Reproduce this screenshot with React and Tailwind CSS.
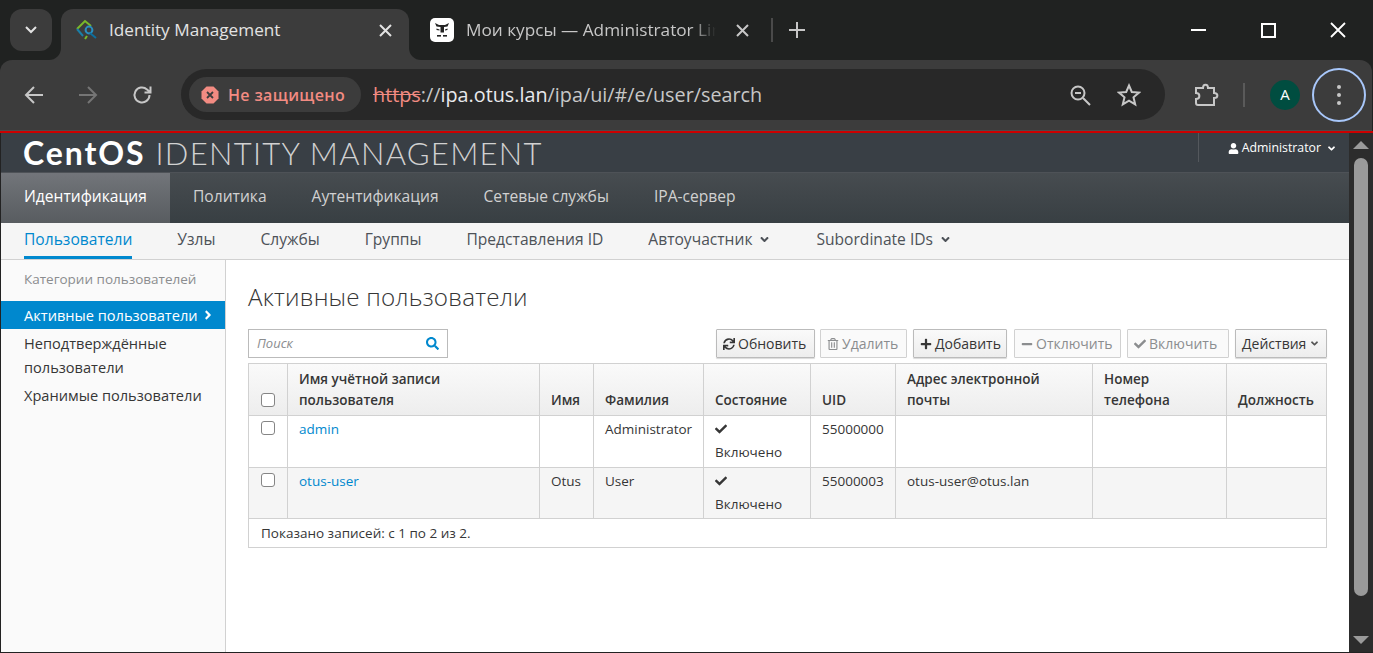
import { FaSync, FaRegTrashAlt, FaPlus, FaMinus, FaCheck, FaSearch, FaUser, FaAngleDown, FaAngleRight } from 'react-icons/fa';

const columns = [39, 252, 54, 110, 107, 85, 197, 134, 100];

function IpaFavicon() {
  return (
    <svg width="24" height="24" viewBox="0 0 24 24" fill="none" strokeWidth="2">
      <path d="M4 11 L12 3 L18 8" stroke="#7ab929" />
      <path d="M4 11 L10 18" stroke="#1a7fa8" />
      <path d="M12 21 L14 18" stroke="#7ab929" />
      <circle cx="16" cy="12" r="3.4" stroke="#2a8fc0" />
      <path d="M17 15 L23 20" stroke="#0e6f9e" />
    </svg>
  );
}

function MoodleFavicon() {
  return (
    <div className="flex h-6 w-6 items-center justify-center rounded-[5px] bg-white">
      <svg width="20" height="20" viewBox="0 0 20 20" fill="#222">
        <path d="M3 3 L7 5 H13 L17 3 L15.5 6.5 L12 7 V12.5 H8.5 V7 L4.5 6.5 Z" />
        <path d="M4.5 8.5 L7.5 9.5 V10.5 L4.5 10 Z M15.5 8.5 L13 9.5 V10.5 L15.5 10 Z" />
        <rect x="5" y="15" width="4" height="1.6" />
        <rect x="11" y="15" width="4" height="1.6" />
      </svg>
    </div>
  );
}

function TabStrip() {
  return (
    <div className="relative flex h-[60px] items-start bg-[#202221] pl-[10px] pt-[9px] text-[#c7c7c7]">
      <div className="flex h-[42px] w-[42px] items-center justify-center rounded-xl bg-[#3c3c3c]">
        <svg width="14" height="10" viewBox="0 0 14 10" fill="none" stroke="#e3e3e3" strokeWidth="2"><path d="M2 2 L7 7 L12 2" /></svg>
      </div>
      <div className="relative ml-[9px] flex h-[51px] w-[348px] items-center rounded-t-xl bg-[#3c3c3c] pb-[9px] pl-[12px]">
        <IpaFavicon />
        <span className="ml-[12px] font-['Open_Sans',sans-serif] text-[17.2px] text-[#e3e3e3]">Identity Management</span>
        <svg className="absolute left-[318px] top-[15px]" width="13" height="13" viewBox="0 0 13 13" stroke="#e3e3e3" strokeWidth="2"><path d="M1 1 L12 12 M12 1 L1 12" /></svg>
        <div className="absolute -left-3 bottom-0 h-3 w-3 bg-[#3c3c3c]"><div className="h-3 w-3 rounded-br-xl bg-[#202221]" /></div>
        <div className="absolute -right-3 bottom-0 h-3 w-3 bg-[#3c3c3c]"><div className="h-3 w-3 rounded-bl-xl bg-[#202221]" /></div>
      </div>
      <div className="ml-[21px] flex h-[42px] items-center">
        <MoodleFavicon />
        <span className="ml-[12px] w-[250px] overflow-hidden whitespace-nowrap font-['Open_Sans',sans-serif] text-[17.2px] [mask-image:linear-gradient(to_right,black_90%,transparent)]">Мои курсы — Administrator Linux</span>
        <svg className="ml-[20px]" width="13" height="13" viewBox="0 0 13 13" stroke="#c7c7c7" strokeWidth="2"><path d="M1 1 L12 12 M12 1 L1 12" /></svg>
        <div className="ml-[22px] h-6 w-[2px] bg-[#4a4a4a]" />
        <svg className="ml-[16px]" width="16" height="16" viewBox="0 0 16 16" stroke="#c7c7c7" strokeWidth="2"><path d="M8 0 V16 M0 8 H16" /></svg>
      </div>
      <div className="ml-auto flex h-[42px] items-center pr-[27px]">
        <div className="h-[2px] w-[15px] bg-white" />
        <div className="ml-[55px] h-[15px] w-[15px] border-2 border-white" />
        <svg className="ml-[54px]" width="16" height="16" viewBox="0 0 16 16" stroke="#fff" strokeWidth="1.8"><path d="M1 1 L15 15 M15 1 L1 15" /></svg>
      </div>
    </div>
  );
}

function Toolbar() {
  return (
    <div className="flex h-[71px] w-[1372px] items-center rounded-t-xl border-b border-[#4a4a4a] bg-[#3c3c3c] pb-[1px] pl-[24px]">
      <svg width="20" height="20" viewBox="0 0 20 20" fill="none" stroke="#c7c7c7" strokeWidth="2"><path d="M19 10 H2 M10 2 L2 10 L10 18" /></svg>
      <svg className="ml-[34px]" width="20" height="20" viewBox="0 0 20 20" fill="none" stroke="#757575" strokeWidth="2"><path d="M1 10 H18 M10 2 L18 10 L10 18" /></svg>
      <svg className="ml-[34px]" width="20" height="20" viewBox="0 0 20 20" fill="none" stroke="#c7c7c7" strokeWidth="2"><path d="M17.5 10 A7.5 7.5 0 1 1 15 4.4 L18 7 M18.5 1.5 V7.5 H12.5" /></svg>
      <div className="ml-[29px] flex h-[51px] w-[984px] items-center rounded-full bg-[#282828] pl-[8px]">
        <div className="flex h-[35px] w-[172px] items-center rounded-full bg-[#3c3c3c] pl-[12px]">
          <svg width="18" height="18" viewBox="0 0 18 18">
            <path d="M5.5 0.5 H12.5 L17.5 5.5 V12.5 L12.5 17.5 H5.5 L0.5 12.5 V5.5 Z" fill="#f28b82" />
            <path d="M6 6 L12 12 M12 6 L6 12" stroke="#3c3c3c" strokeWidth="1.8" />
          </svg>
          <span className="ml-[9px] whitespace-nowrap font-['Open_Sans',sans-serif] text-[16px] font-semibold tracking-[0.35px] text-[#f28b82]">Не защищено</span>
        </div>
        <div className="ml-[12px] whitespace-nowrap font-['Open_Sans',sans-serif] text-[19.8px] text-[#c7c7c7]">
          <span className="text-[#f28b82] line-through">https</span>://<span className="text-[#e8eaed]">ipa.otus.lan</span>/ipa/ui/#/e/user/search
        </div>
        <svg className="ml-auto" width="22" height="22" viewBox="0 0 22 22" fill="none" stroke="#c7c7c7" strokeWidth="2"><circle cx="9" cy="9" r="6.5" /><path d="M6 9 H12 M14 14 L21 21" /></svg>
        <svg className="ml-[26px] mr-[24px]" width="24" height="24" viewBox="0 0 24 24" fill="none" stroke="#c7c7c7" strokeWidth="2"><path d="M12 2.5 L14.8 9 L22 9.6 L16.5 14.3 L18.2 21.3 L12 17.6 L5.8 21.3 L7.5 14.3 L2 9.6 L9.2 9 Z" /></svg>
      </div>
      <svg className="ml-[28px]" width="26" height="26" viewBox="0 0 26 26" fill="none" stroke="#c7c7c7" strokeWidth="2"><path d="M3 6 H10 C10 1.5 15 1.5 15 6 H21 V11 C25.5 11 25.5 16 21 16 V23 H5 Q3 23 3 21 V17 C7.5 17 7.5 11 3 11 Z" /></svg>
      <div className="ml-[24px] h-6 w-[2px] bg-[#5a5a5a]" />
      <div className="ml-[25px] flex h-[30px] w-[30px] items-center justify-center rounded-full bg-[#004d40] font-['Open_Sans',sans-serif] text-[15px] text-white">A</div>
      <div className="ml-[12px] flex h-[54px] w-[54px] flex-col items-center justify-center gap-[4px] rounded-full border-2 border-[#a8c7fa]">
        <div className="h-1 w-1 rounded-full bg-[#c7c7c7]" />
        <div className="h-1 w-1 rounded-full bg-[#c7c7c7]" />
        <div className="h-1 w-1 rounded-full bg-[#c7c7c7]" />
      </div>
    </div>
  );
}

function Masthead() {
  return (
    <div className="flex h-[40px] items-center justify-between border-b border-[#4e5257] bg-[#393f45] text-white">
      <div className="ml-[22px] flex items-baseline whitespace-nowrap font-['Lato',sans-serif]">
        <span className="text-[32px] font-bold tracking-[1.9px]">CentOS</span>
        <span className="ml-[10px] text-[31px] font-light tracking-[1.3px] text-[#d1d1d1]">IDENTITY MANAGEMENT</span>
      </div>
      <div className="mr-[12px] flex h-[29px] items-center self-start border-l border-[#54585d] pl-[29px] pt-[1px] text-[12.3px]">
        <FaUser className="mr-[3px] text-[11px]" />
        Administrator
        <FaAngleDown className="ml-[5px] text-[11px]" />
      </div>
    </div>
  );
}

function PrimaryNav() {
  const items = ['Политика', 'Аутентификация', 'Сетевые службы', 'IPA-сервер'];
  return (
    <div className="flex h-[50px] bg-gradient-to-b from-[#474c50] to-[#383f43] pb-[2px] text-[15.6px] text-[#d1d1d1]">
      <div className="-mb-[2px] flex w-[169px] items-center bg-gradient-to-b from-[#72757a] to-[#585c60] pb-[2px] pl-[23px] text-white">Идентификация</div>
      <div className="ml-[23px] flex items-center gap-[45px]">
        {items.map((item) => <span key={item}>{item}</span>)}
      </div>
    </div>
  );
}

function SecondaryNav() {
  const items = ['Узлы', 'Службы', 'Группы', 'Представления ID'];
  return (
    <div className="flex h-[37px] items-stretch gap-[45px] border-b border-[#d1d1d1] bg-[#f5f5f5] pl-[23px] text-[15.6px] text-[#4d5258]">
      <span className="flex items-center border-b-[3px] border-[#0088ce] text-[#0088ce]">Пользователи</span>
      {items.map((item) => <span key={item} className="flex items-center pb-[3px]">{item}</span>)}
      <span className="flex items-center pb-[3px]">Автоучастник<FaAngleDown className="ml-[6px] text-[13px]" /></span>
      <span className="flex items-center pb-[3px]">Subordinate IDs<FaAngleDown className="ml-[6px] text-[13px]" /></span>
    </div>
  );
}

function Sidebar() {
  return (
    <div className="w-[225px] shrink-0 border-r border-[#d1d1d1] bg-[#fafafa] pt-[9px] text-[14.6px] leading-[24px] text-[#363636]">
      <div className="pl-[23px] text-[13.5px] leading-[20px] text-[#8b8d8f]">Категории пользователей</div>
      <div className="mt-[12px] flex h-[28px] items-center justify-between bg-[#0088ce] pl-[23px] pr-[10px] text-white">
        Активные пользователи
        <FaAngleRight className="text-[14px]" />
      </div>
      <div className="px-[23px] pt-[2px]">Неподтверждённые пользователи</div>
      <div className="px-[23px] pt-[4px]">Хранимые пользователи</div>
    </div>
  );
}

function ActionButton({ icon: Icon, children, disabled, trailing, className }) {
  return (
    <button className={`flex h-[29px] items-center rounded-[1px] border pl-[6px] text-[14px] ${disabled ? 'border-[#d1d1d1] bg-[#fafafa] text-[#8b8d8f]' : 'border-[#bbb] bg-gradient-to-b from-[#fafafa] to-[#ededed] text-[#363636] shadow-[0_1px_1px_rgba(0,0,0,0.15)]'} ${className}`}>
      {Icon && <Icon className="mr-[3px] shrink-0 text-[12px]" />}
      {children}
      {trailing && <FaAngleDown className="ml-[3px] text-[11px] text-[#555]" />}
    </button>
  );
}

function Checkbox() {
  return <div className="h-[14px] w-[14px] rounded-[3px] border border-[#858585] bg-white" />;
}

function UsersTable() {
  const headers = [
    'Имя учётной записи пользователя', 'Имя', 'Фамилия', 'Состояние', 'UID',
    'Адрес электронной почты', 'Номер телефона', 'Должность',
  ];
  const rows = [
    { login: 'admin', first: '', last: 'Administrator', uid: '55000000', mail: '', h: 'h-[52px]', bg: 'bg-white' },
    { login: 'otus-user', first: 'Otus', last: 'User', uid: '55000003', mail: 'otus-user@otus.lan', h: 'h-[51px]', bg: 'bg-[#f5f5f5]' },
  ];
  const cell = 'border border-[#d1d1d1] px-[11px] align-top pt-[1px]';
  return (
    <table className="mt-[5px] w-[1078px] table-fixed border-collapse text-[13.5px] leading-[24px] text-[#363636]">
      <colgroup>
        {columns.map((w, i) => <col key={i} style={{ width: w }} />)}
      </colgroup>
      <thead>
        <tr className="h-[52px] bg-gradient-to-b from-[#fafafa] to-[#ededed]">
          <th className="border border-[#d1d1d1] pb-[8px] pl-[12px] align-bottom"><Checkbox /></th>
          {headers.map((h) => (
            <th key={h} className="border border-[#d1d1d1] px-[11px] pb-[4px] text-left align-bottom text-[13.5px] font-semibold leading-[21px]">{h}</th>
          ))}
        </tr>
      </thead>
      <tbody>
        {rows.map((r) => (
          <tr key={r.login} className={`${r.h} ${r.bg}`}>
            <td className="border border-[#d1d1d1] pl-[12px] pt-[5px] align-top"><Checkbox /></td>
            <td className={`${cell} text-[#0088ce]`}>{r.login}</td>
            <td className={cell}>{r.first}</td>
            <td className={cell}>{r.last}</td>
            <td className={cell}>
              <FaCheck className="mb-[5px] mt-[6px] text-[12px]" />
              Включено
            </td>
            <td className={cell}>{r.uid}</td>
            <td className={cell}>{r.mail}</td>
            <td className={cell} />
            <td className={cell} />
          </tr>
        ))}
        <tr className="h-[29px] bg-white">
          <td colSpan={9} className="border border-[#d1d1d1] pl-[12px] text-[13.5px]">Показано записей: с 1 по 2 из 2.</td>
        </tr>
      </tbody>
    </table>
  );
}

function Content() {
  return (
    <div className="flex-1 bg-white pl-[22px] pr-[22px] pt-[21px]">
      <h1 className="text-[24.2px] font-light leading-[32px] tracking-[0.2px] text-[#363636]">Активные пользователи</h1>
      <div className="mt-[16px] flex items-center justify-between">
        <div className="flex h-[29px] w-[200px] items-center justify-between border border-[#bbb] pl-[8px] pr-[8px] text-[13px] italic text-[#8b8d8f]">
          Поиск
          <FaSearch className="text-[13px] text-[#0088ce]" />
        </div>
        <div className="flex">
          <ActionButton icon={FaSync} className="w-[99px]">Обновить</ActionButton>
          <ActionButton icon={FaRegTrashAlt} disabled className="ml-[5px] w-[87px]">Удалить</ActionButton>
          <ActionButton icon={FaPlus} className="ml-[6px] w-[94px]">Добавить</ActionButton>
          <ActionButton icon={FaMinus} disabled className="ml-[7px] w-[107px]">Отключить</ActionButton>
          <ActionButton icon={FaCheck} disabled className="ml-[6px] w-[102px]">Включить</ActionButton>
          <ActionButton trailing className="ml-[6px] w-[92px]">Действия</ActionButton>
        </div>
      </div>
      <UsersTable />
    </div>
  );
}

function Scrollbar() {
  return (
    <div className="flex w-[24px] shrink-0 flex-col items-center bg-[#2c2c2c] py-[8px]">
      <div className="h-0 w-0 border-x-[8px] border-b-[8px] border-x-transparent border-b-[#9a9a9a]" />
      <div className="mt-[9px] w-[14px] flex-1 rounded-full bg-[#9a9a9a]" />
      <div className="mt-[40px] h-0 w-0 border-x-[8px] border-t-[8px] border-x-transparent border-t-[#9a9a9a]" />
    </div>
  );
}

export default function App() {
  return (
    <div className="h-[653px] w-[1373px] overflow-hidden bg-[#202221] font-['Open_Sans',sans-serif]">
      <TabStrip />
      <Toolbar />
      <div className="h-[2px] bg-[#cc0000]" />
      <div className="flex h-[520px] border-b border-[#222]">
        <div className="flex min-w-0 flex-1 flex-col border-l border-[#222]">
          <Masthead />
          <PrimaryNav />
          <SecondaryNav />
          <div className="flex min-h-0 flex-1">
            <Sidebar />
            <Content />
          </div>
        </div>
        <Scrollbar />
      </div>
    </div>
  );
}
